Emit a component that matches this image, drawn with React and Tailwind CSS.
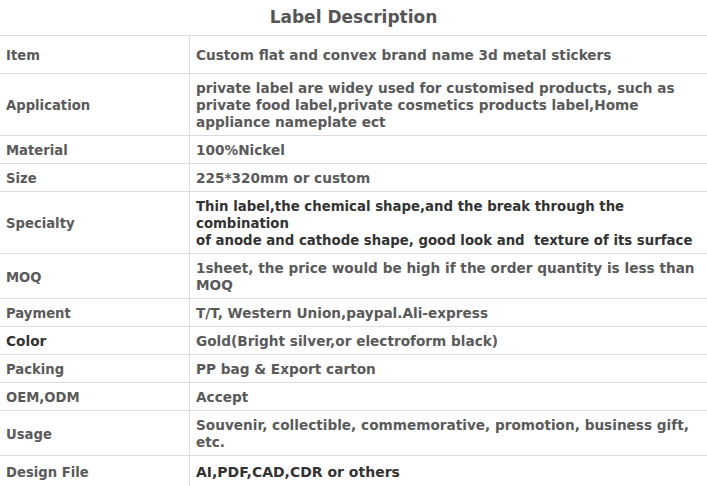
import React from "react";

const V = "font-['Verdana','DejaVu_Sans',sans-serif]";
const T = "font-['Tahoma','DejaVu_Sans',sans-serif]";

const rows = [
  { k: "Item", v: "Custom flat and convex brand name 3d metal stickers", h: "h-[38px]" },
  { k: "Application", v: ["private label are widey used for customised products, such as", "private food label,private cosmetics products label,Home", "appliance nameplate ect"] },
  { k: "Material", v: "100%Nickel" },
  { k: "Size", v: "225*320mm or custom" },
  { k: "Specialty", v: ["Thin label,the chemical shape,and the break through the", "combination", "of anode and cathode shape, good look and\u00a0 texture of its surface"], vt: "text-[13.3px]" },
  { k: "MOQ", v: ["1sheet, the price would be high if the order quantity is less than", "MOQ"] },
  { k: "Payment", v: "T/T, Western Union,paypal.Ali-express" },
  { k: "Color", v: "Gold(Bright silver,or electroform black)", kt: true },
  { k: "Packing", v: "PP bag & Export carton" },
  { k: "OEM,ODM", v: "Accept" },
  { k: "Usage", v: ["Souvenir, collectible, commemorative, promotion, business gift,", "etc."] },
  { k: "Design File", v: "AI,PDF,CAD,CDR or others", vt: "text-[14px]", h: "h-[32px]" },
];

export default function App() {
  return (
    <div className="w-[707px] h-[486px] overflow-hidden bg-white">
      <div className={`h-[35px] flex items-center justify-center text-[17px] font-bold text-[#555] ${T}`}>
        Label Description
      </div>
      <div className="border-t border-[#dcdcdc]">
        {rows.map((r, i) => (
          <div key={i} className={`flex border-b border-[#dcdcdc] ${r.h || ""}`}>
            <div
              className={`w-[190px] shrink-0 border-r border-[#dcdcdc] pl-[6px] pt-[6px] pb-[4px] flex items-center leading-[17px] font-bold ${
                r.kt ? `${T} text-[13.7px] text-[#333]` : `${V} text-[13.2px] text-[#5a5a5a]`
              }`}
            >
              {r.k}
            </div>
            <div
              className={`flex-1 pl-[6px] pr-[4px] pt-[6px] pb-[4px] flex flex-col justify-center leading-[17px] font-bold whitespace-nowrap ${
                r.vt ? `${T} ${r.vt} text-[#333]` : `${V} text-[13.65px] text-[#5a5a5a]`
              }`}
            >
              {Array.isArray(r.v) ? r.v.map((l, j) => <div key={j}>{l}</div>) : <div>{r.v}</div>}
            </div>
          </div>
        ))}
      </div>
    </div>
  );
}
